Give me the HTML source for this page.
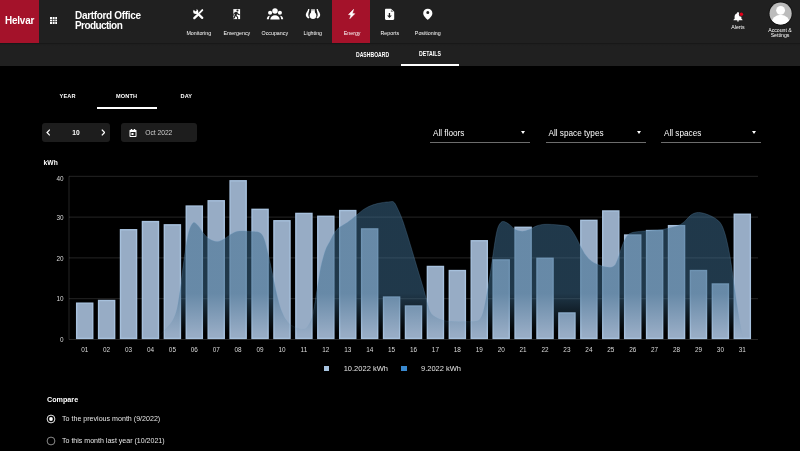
<!DOCTYPE html>
<html>
<head>
<meta charset="utf-8">
<title>Helvar Insights - Energy</title>
<style>
html,body{margin:0;padding:0;background:#000;}
body{width:800px;height:451px;overflow:hidden;position:relative;font-family:"Liberation Sans",sans-serif;color:#fff;}
.abs{position:absolute;white-space:nowrap;line-height:1;}
#topbar{position:absolute;left:0;top:0;width:800px;height:43px;background:#212121;}
#subbar{position:absolute;left:0;top:43px;width:800px;height:22.800px;background:linear-gradient(#161616,#1f1f1f 1.500px,#212121 3px);box-sizing:border-box;}
#logo{position:absolute;left:0;top:0;width:39px;height:43px;background:#a5132b;}
#logo span{position:absolute;left:4.500px;top:15px;font-weight:bold;font-size:11px;line-height:11px;transform-origin:0 0;transform:scaleX(0.9);letter-spacing:-0.2px;}
.nav{position:absolute;top:0;width:38px;height:43px;text-align:center;}
.nav.active{background:#a5132b;}
.nav .lbl{position:absolute;left:-9.2px;right:-10.8px;top:29.6px;font-size:5.3px;line-height:6px;text-align:center;color:#fff;}
.nav svg{position:absolute;left:13px;top:8px;width:12px;height:12px;}
.chart{position:absolute;left:0;top:0;}
.xl{position:absolute;top:345.7px;width:20px;text-align:center;font-size:6.4px;line-height:7px;color:#dcdcdc;}
.yl{position:absolute;left:43.5px;width:20px;text-align:right;font-size:6.4px;line-height:7px;color:#dcdcdc;}
.box{position:absolute;background:#1e1e1e;border-radius:3px;}
.sel{position:absolute;height:1.4px;background:#6e6e6e;}
.tri{position:absolute;width:0;height:0;border-left:2.7px solid transparent;border-right:2.7px solid transparent;border-top:3.1px solid #fff;}
</style>
</head>
<body>
<div id="root" style="position:absolute;left:0;top:0;width:800px;height:451px;will-change:transform;transform:translateZ(0);opacity:0.999">
<div id="topbar">
  <div id="logo"><span>Helvar</span></div>
  <!-- grid icon -->
  <svg class="abs" style="left:49.700px;top:16.500px" width="7.400" height="7" viewBox="0 0 8 8" preserveAspectRatio="none"><rect width="8" height="8" fill="#fff"/><g fill="#212121"><rect x="2.300" y="0" width=".7" height="8"/><rect x="5" y="0" width=".7" height="8"/><rect x="0" y="2.300" width="8" height=".7"/><rect x="0" y="5" width="8" height=".7"/></g></svg>
  <div class="abs" id="title" style="left:75px;top:10.500px;font-weight:bold;font-size:10px;line-height:10px;letter-spacing:-0.32px;">Dartford Office<br><span style="letter-spacing:-0.560px">Production</span></div>

  <div class="nav" style="left:179px">
    <div class="lbl">Monitoring</div>
  </div>
  <div class="nav" style="left:217px">
    <div class="lbl">Emergency</div>
  </div>
  <div class="nav" style="left:255px">
    <div class="lbl">Occupancy</div>
  </div>
  <div class="nav" style="left:293px">
    <div class="lbl">Lighting</div>
  </div>
  <div class="nav active" style="left:332.400px;width:37.900px">
    <div class="lbl">Energy</div>
  </div>
  <div class="nav" style="left:370px">
    <div class="lbl">Reports</div>
  </div>
  <div class="nav" style="left:408px">
    <div class="lbl">Positioning</div>
  </div>


  <svg class="abs" style="left:0;top:0" width="800" height="43" viewBox="0 0 800 43">
    <!-- monitoring: crossed wrench + screwdriver -->
    <g stroke="#fff" stroke-linecap="round" fill="none">
      <line x1="196.500" y1="12.300" x2="202.200" y2="17.900" stroke-width="2.300"/>
      <line x1="202.300" y1="10.100" x2="199.600" y2="12.800" stroke-width="1.900"/>
      <line x1="198" y1="14.600" x2="194.300" y2="18.100" stroke-width="2.300"/>
    </g>
    <circle cx="195.700" cy="11.500" r="2.500" fill="#fff"/>
    <path d="M192.500 8.500l3 3 1.500-1.500-2.600-2.900z" fill="#212121"/>
    <!-- emergency -->
    <rect x="233" y="9.100" width="7.100" height="10" fill="#fff"/>
    <g fill="#212121" transform="translate(236.600 14.100) scale(1.2) translate(-237.300 -14.200)"><circle cx="238" cy="11.200" r=".900"/><path d="M235 13.300l1.700-1 1.300.3.900 1.400 1.100.3-.2.800-1.500-.4-.6-.9-.4 1.500 1.300 1.300v2.200h-.9v-1.900l-1.300-1.200-.6 1.900-2 .6-.3-.8 1.600-.5.800-3.100-.8.500v1.100h-.800z"/><rect x="234" y="10" width="1.200" height="8" opacity=".35"/></g>
    <!-- occupancy -->
    <g fill="#fff">
      <circle cx="275" cy="11.100" r="2.750"/>
      <path d="M270.300 19.500c0-2.600 2.100-4.200 4.700-4.200s4.700 1.600 4.700 4.200z"/>
      <circle cx="270.100" cy="12.800" r="2.050"/>
      <circle cx="279.900" cy="12.800" r="2.050"/>
      <path d="M266.800 19.200c0-2 1.200-3.300 3.200-3.500-.700.900-1.100 2-1.100 3.500z"/>
      <path d="M283.200 19.200c0-2-1.200-3.300-3.200-3.500.7.900 1.100 2 1.100 3.500z"/>
    </g>
    <!-- lighting -->
    <g fill="#fff">
      <circle cx="313" cy="15.600" r="3.350"/>
      <path d="M311.400 9.300h3.200l.5 4.500h-4.200z"/>
      <rect x="311.400" y="9" width="3.200" height="1.500" fill="#a8a8a8"/>
      <path d="M308.200 9 L309.400 9 C309.200 11.400 308.400 12.800 308.300 14.700 C308.300 16 309 17 309.600 17.800 L308.100 18.500 C306.700 17.400 305.800 16.200 305.800 14.800 C305.800 12.800 307.700 11.500 308.200 9 Z"/>
      <path d="M317.800 9 L316.600 9 C316.800 11.400 317.600 12.800 317.700 14.700 C317.700 16 317 17 316.400 17.800 L317.900 18.500 C319.300 17.400 320.200 16.200 320.200 14.800 C320.200 12.800 318.300 11.500 317.800 9 Z"/>
    </g>
    <!-- energy bolt -->
    <path fill="#fff" stroke="#fff" stroke-width=".5" stroke-linejoin="round" d="M353.600 9.300L348.500 14.600 350.900 14.900 349.800 18.700 354.800 13.700 352.400 13.400Z"/>
    <!-- reports -->
    <path fill="#fff" d="M386.200 8.700h4.800l3.200 3.100v7c0 .7-.5 1.200-1.200 1.200h-6.800c-.7 0-1.200-.5-1.200-1.200V9.900c0-.7.500-1.200 1.200-1.200z"/>
    <path fill="#212121" opacity=".5" d="M390.900 9.500v2.500h2.600z"/>
    <path fill="#212121" d="M388.800 13h1.300v2.500h1.700l-2.350 2.500-2.350-2.500h1.700z"/>
    <!-- positioning -->
    <path fill="#fff" fill-rule="evenodd" d="M427.800 8.800C425.200 8.800 423.200 10.800 423.200 13.300 C423.200 16.600 427.800 20 427.800 20 C427.800 20 432.400 16.600 432.400 13.300 C432.400 10.800 430.400 8.800 427.800 8.800 Z M427.800 14 a1.500 1.500 0 1 1 0 -3 a1.500 1.500 0 0 1 0 3 Z"/>
  </svg>
  <!-- alerts -->
  <svg class="abs" style="left:730px;top:8px" width="16" height="16" viewBox="730 8 16 16"><path fill="#fff" d="M738 12c.5 0 .9.400.9.900v.3c1.500.4 2.500 1.700 2.500 3.300v2.200l1.100 1v.5h-9v-.5l1.100-1v-2.200c0-1.600 1-2.900 2.500-3.300v-.3c0-.5.400-.9.900-.9zM737 20.600h2c0 .6-.4 1-1 1s-1-.4-1-1z"/><circle cx="741.400" cy="14.300" r="2.500" fill="#212121"/><circle cx="741.400" cy="14.300" r="1.750" fill="#e2001a"/></svg>
  <div class="abs" style="left:723px;top:23.500px;width:30px;text-align:center;font-size:5.200px;line-height:6px">Alerts</div>
  <!-- account -->
  <svg class="abs" style="left:766px;top:0px" width="30" height="28" viewBox="766 0 30 28"><defs><clipPath id="cp"><circle cx="780.600" cy="13.500" r="11.100"/></clipPath></defs><circle cx="780.600" cy="13.500" r="12" fill="#141414"/><circle cx="780.600" cy="13.500" r="11.100" fill="#bdbdbd"/><g clip-path="url(#cp)" fill="#fff"><circle cx="780.600" cy="10.300" r="4.400"/><ellipse cx="780.600" cy="24.600" rx="9.600" ry="9.900"/></g></svg>
  <div class="abs" style="left:760px;top:27.500px;width:40px;text-align:center;font-size:5.200px;line-height:5.800px;white-space:normal">Account &amp;<br>Settings</div>
</div>
<div id="subbar">
  <div class="abs" style="left:355.600px;top:9px;font-size:6.800px;font-weight:bold;transform-origin:0 0;transform:scaleX(0.750)">DASHBOARD</div>
  <div class="abs" style="left:418.600px;top:8px;font-size:6.800px;font-weight:bold;transform-origin:0 0;transform:scaleX(0.765)">DETAILS</div>
  <div class="abs" style="left:401px;top:20.600px;width:58px;height:2.100px;background:#fff"></div>
</div>

<!-- period tabs -->
<div class="abs" style="left:59.500px;top:93.800px;font-size:5.6px;font-weight:bold;letter-spacing:0.15px">YEAR</div>
<div class="abs" style="left:116px;top:93.800px;font-size:5.6px;font-weight:bold;letter-spacing:0.15px">MONTH</div>
<div class="abs" style="left:180.500px;top:93.800px;font-size:5.6px;font-weight:bold;letter-spacing:0.15px">DAY</div>
<div class="abs" style="left:97px;top:106.500px;width:60px;height:2px;background:#fff"></div>

<!-- month stepper -->
<div class="box" style="left:41.600px;top:123.200px;width:68.600px;height:18.800px"></div>
<svg class="abs" style="left:45.800px;top:129.200px" width="4.700" height="7" viewBox="0 0 4 6"><path d="M3.300 .5L.9 3l2.400 2.500" stroke="#fff" stroke-width="1.100" fill="none"/></svg>
<div class="abs" style="left:66px;top:130px;width:20px;text-align:center;font-size:6.700px;font-weight:bold">10</div>
<svg class="abs" style="left:100.800px;top:129.200px" width="4.700" height="7" viewBox="0 0 4 6"><path d="M.7 .5L3.100 3 .7 5.500" stroke="#fff" stroke-width="1.100" fill="none"/></svg>

<!-- date box -->
<div class="box" style="left:120.600px;top:123.200px;width:76.200px;height:18.800px"></div>
<svg class="abs" style="left:129px;top:128.500px" width="8" height="8" viewBox="0 0 16 16"><path fill="#fff" fill-rule="evenodd" d="M4 0h2v1.500h4V0h2v1.500h1.500c.8 0 1.500.7 1.500 1.500v11.500c0 .8-.7 1.500-1.500 1.500h-11C1.700 16 1 15.300 1 14.500V3c0-.8.700-1.500 1.500-1.500H4zM3 6v8h10V6zM5 8h4v4H5z"/></svg>
<div class="abs" style="left:145.200px;top:130px;font-size:6.700px;color:#cfcfcf">Oct 2022</div>

<!-- dropdowns -->
<div class="abs" style="left:433px;top:130px;font-size:8.200px">All floors</div>
<div class="tri" style="left:521.200px;top:131.200px"></div>
<div class="sel" style="left:430px;top:141.600px;width:100px"></div>
<div class="abs" style="left:548.500px;top:130px;font-size:8.200px">All space types</div>
<div class="tri" style="left:636.800px;top:131.200px"></div>
<div class="sel" style="left:545.500px;top:141.600px;width:100px"></div>
<div class="abs" style="left:664px;top:130px;font-size:8.200px">All spaces</div>
<div class="tri" style="left:752.300px;top:131.200px"></div>
<div class="sel" style="left:661px;top:141.600px;width:100px"></div>

<!-- chart -->
<div class="abs" style="left:43.600px;top:160px;font-size:6.700px;font-weight:bold">kWh</div>
<svg class="chart" width="800" height="451" viewBox="0 0 800 451">
<defs><linearGradient id="ag" x1="0" y1="176" x2="0" y2="339" gradientUnits="userSpaceOnUse"><stop offset="0" stop-color="#3e6c8e" stop-opacity="0.53"/><stop offset="0.72" stop-color="#3e6c8e" stop-opacity="0.53"/><stop offset="0.97" stop-color="#3e6c8e" stop-opacity="0"/></linearGradient><linearGradient id="sg" x1="0" y1="176" x2="0" y2="339" gradientUnits="userSpaceOnUse"><stop offset="0" stop-color="#6c9cc4" stop-opacity="0.24"/><stop offset="0.72" stop-color="#6c9cc4" stop-opacity="0.24"/><stop offset="0.97" stop-color="#6c9cc4" stop-opacity="0.05"/></linearGradient></defs>
<rect x="69.0" y="339.00" width="689.0" height="1" fill="#ffffff" fill-opacity="0.15"/>
<rect x="69.0" y="298.20" width="689.0" height="1" fill="#ffffff" fill-opacity="0.15"/>
<rect x="69.0" y="257.40" width="689.0" height="1" fill="#ffffff" fill-opacity="0.15"/>
<rect x="69.0" y="216.60" width="689.0" height="1" fill="#ffffff" fill-opacity="0.15"/>
<rect x="69.0" y="175.80" width="689.0" height="1" fill="#ffffff" fill-opacity="0.15"/>
<rect x="68.5" y="176.3" width="1" height="163.2" fill="#ffffff" fill-opacity="0.15"/>
<rect x="76.65" y="303.18" width="16.10" height="35.22" fill="#98adc6" stroke="#a8c2de" stroke-width="1.4"/>
<rect x="98.57" y="300.49" width="16.10" height="37.91" fill="#98adc6" stroke="#a8c2de" stroke-width="1.4"/>
<rect x="120.49" y="229.74" width="16.10" height="108.66" fill="#98adc6" stroke="#a8c2de" stroke-width="1.4"/>
<rect x="142.41" y="221.58" width="16.10" height="116.82" fill="#98adc6" stroke="#a8c2de" stroke-width="1.4"/>
<rect x="164.33" y="224.84" width="16.10" height="113.56" fill="#98adc6" stroke="#a8c2de" stroke-width="1.4"/>
<rect x="186.25" y="206.08" width="16.10" height="132.32" fill="#98adc6" stroke="#a8c2de" stroke-width="1.4"/>
<rect x="208.17" y="200.77" width="16.10" height="137.63" fill="#98adc6" stroke="#a8c2de" stroke-width="1.4"/>
<rect x="230.09" y="180.78" width="16.10" height="157.62" fill="#98adc6" stroke="#a8c2de" stroke-width="1.4"/>
<rect x="252.01" y="209.34" width="16.10" height="129.06" fill="#98adc6" stroke="#a8c2de" stroke-width="1.4"/>
<rect x="273.93" y="220.76" width="16.10" height="117.64" fill="#98adc6" stroke="#a8c2de" stroke-width="1.4"/>
<rect x="295.85" y="213.42" width="16.10" height="124.98" fill="#98adc6" stroke="#a8c2de" stroke-width="1.4"/>
<rect x="317.77" y="216.28" width="16.10" height="122.12" fill="#98adc6" stroke="#a8c2de" stroke-width="1.4"/>
<rect x="339.69" y="210.56" width="16.10" height="127.84" fill="#98adc6" stroke="#a8c2de" stroke-width="1.4"/>
<rect x="361.61" y="228.92" width="16.10" height="109.48" fill="#98adc6" stroke="#a8c2de" stroke-width="1.4"/>
<rect x="383.53" y="297.06" width="16.10" height="41.34" fill="#98adc6" stroke="#a8c2de" stroke-width="1.4"/>
<rect x="405.45" y="306.04" width="16.10" height="32.36" fill="#98adc6" stroke="#a8c2de" stroke-width="1.4"/>
<rect x="427.37" y="266.46" width="16.10" height="71.94" fill="#98adc6" stroke="#a8c2de" stroke-width="1.4"/>
<rect x="449.29" y="270.54" width="16.10" height="67.86" fill="#98adc6" stroke="#a8c2de" stroke-width="1.4"/>
<rect x="471.21" y="240.76" width="16.10" height="97.64" fill="#98adc6" stroke="#a8c2de" stroke-width="1.4"/>
<rect x="493.13" y="259.93" width="16.10" height="78.47" fill="#98adc6" stroke="#a8c2de" stroke-width="1.4"/>
<rect x="515.05" y="227.29" width="16.10" height="111.11" fill="#98adc6" stroke="#a8c2de" stroke-width="1.4"/>
<rect x="536.97" y="258.30" width="16.10" height="80.10" fill="#98adc6" stroke="#a8c2de" stroke-width="1.4"/>
<rect x="558.89" y="312.97" width="16.10" height="25.43" fill="#98adc6" stroke="#a8c2de" stroke-width="1.4"/>
<rect x="580.81" y="220.36" width="16.10" height="118.04" fill="#98adc6" stroke="#a8c2de" stroke-width="1.4"/>
<rect x="602.73" y="210.97" width="16.10" height="127.43" fill="#98adc6" stroke="#a8c2de" stroke-width="1.4"/>
<rect x="624.65" y="235.04" width="16.10" height="103.36" fill="#98adc6" stroke="#a8c2de" stroke-width="1.4"/>
<rect x="646.57" y="230.56" width="16.10" height="107.84" fill="#98adc6" stroke="#a8c2de" stroke-width="1.4"/>
<rect x="668.49" y="225.66" width="16.10" height="112.74" fill="#98adc6" stroke="#a8c2de" stroke-width="1.4"/>
<rect x="690.41" y="270.54" width="16.10" height="67.86" fill="#98adc6" stroke="#a8c2de" stroke-width="1.4"/>
<rect x="712.33" y="284.00" width="16.10" height="54.40" fill="#98adc6" stroke="#a8c2de" stroke-width="1.4"/>
<rect x="734.25" y="214.24" width="16.10" height="124.16" fill="#98adc6" stroke="#a8c2de" stroke-width="1.4"/>
<path d="M150.5 339.0 C151.8 338.7 155.6 338.5 158.0 337.0 C160.4 335.5 162.6 332.5 165.0 329.8 C167.4 327.1 170.5 324.3 172.5 320.8 C174.5 317.3 175.8 313.8 177.0 308.8 C178.2 303.8 179.0 297.8 180.0 290.8 C181.0 283.8 182.0 274.4 183.0 266.9 C184.0 259.4 185.0 251.9 186.0 245.9 C187.0 239.9 187.8 234.9 189.0 231.0 C190.2 227.1 191.9 223.5 193.4 222.6 C194.9 221.7 196.2 223.7 198.0 225.6 C199.8 227.5 202.0 231.7 204.0 234.0 C206.0 236.3 207.8 238.1 210.0 239.3 C212.2 240.5 214.9 241.6 217.4 241.4 C219.9 241.2 222.4 239.7 224.9 238.4 C227.4 237.1 229.8 234.6 232.3 233.4 C234.8 232.2 236.5 231.3 239.8 231.0 C243.1 230.7 248.7 231.3 252.0 231.6 C255.3 231.8 257.5 231.4 259.5 232.5 C261.5 233.6 262.5 234.7 264.0 238.4 C265.5 242.1 266.9 248.7 268.4 254.9 C269.9 261.1 271.4 268.9 272.9 275.9 C274.4 282.9 275.9 290.8 277.4 296.8 C278.9 302.8 280.1 307.6 281.9 311.8 C283.6 316.1 285.6 319.7 287.9 322.3 C290.1 324.9 292.9 326.2 295.4 327.4 C297.9 328.5 300.9 329.3 302.9 329.2 C304.9 329.1 305.9 328.7 307.4 326.8 C308.9 324.9 310.6 321.8 311.9 317.8 C313.1 313.8 313.9 308.3 314.9 302.8 C315.9 297.3 316.8 290.9 317.8 284.9 C318.8 278.9 319.6 272.6 320.8 266.9 C322.1 261.1 323.8 254.7 325.3 250.4 C326.8 246.2 327.9 244.9 329.8 241.4 C331.7 237.9 334.0 232.6 336.9 229.5 C339.8 226.4 344.0 224.9 347.2 222.6 C350.4 220.3 352.9 218.1 355.8 215.8 C358.7 213.5 361.5 210.7 364.4 208.9 C367.3 207.1 370.1 205.8 373.0 204.8 C375.9 203.8 378.6 203.2 381.5 202.7 C384.4 202.2 388.1 201.8 390.1 201.7 C392.1 201.6 392.5 201.1 393.6 202.0 C394.8 202.9 395.6 204.3 397.0 207.2 C398.4 210.1 400.5 214.6 402.2 219.2 C403.9 223.8 405.6 229.2 407.3 234.7 C409.0 240.1 410.8 246.2 412.5 251.9 C414.2 257.6 415.9 263.3 417.6 269.0 C419.3 274.7 421.2 280.9 422.8 286.2 C424.4 291.5 425.6 296.7 426.9 301.0 C428.1 305.3 428.9 309.3 430.3 312.0 C431.7 314.7 433.2 315.7 435.5 317.1 C437.8 318.5 440.9 319.9 444.0 320.6 C447.1 321.4 450.9 321.4 454.4 321.6 C457.8 321.8 461.3 321.7 464.7 321.6 C468.1 321.6 472.4 321.8 475.0 321.3 C477.6 320.9 478.7 320.7 480.1 318.9 C481.5 317.1 482.5 314.6 483.6 310.3 C484.8 306.0 485.9 299.4 487.0 293.1 C488.1 286.8 489.2 279.9 490.4 272.5 C491.5 265.1 492.8 255.6 493.9 248.4 C495.0 241.2 496.1 233.8 497.3 229.5 C498.5 225.2 499.7 223.9 500.8 222.6 C501.9 221.3 502.8 221.3 504.2 221.6 C505.6 221.9 507.4 223.1 509.3 224.4 C511.2 225.7 513.3 228.4 515.5 229.5 C517.7 230.6 520.0 231.2 522.3 231.2 C524.6 231.2 526.9 230.3 529.2 229.5 C531.5 228.7 533.8 226.9 536.1 226.1 C538.4 225.2 540.4 224.7 543.0 224.4 C545.6 224.1 548.6 224.3 551.5 224.4 C554.4 224.5 557.5 224.8 560.1 225.1 C562.7 225.4 565.3 225.5 567.0 226.1 C568.7 226.7 569.0 226.8 570.4 228.5 C571.8 230.2 573.9 233.4 575.6 236.4 C577.3 239.4 579.1 243.5 580.8 246.7 C582.5 249.8 584.0 252.8 585.9 255.3 C587.8 257.8 589.5 259.8 592.0 261.5 C594.5 263.2 597.7 264.6 600.6 265.6 C603.5 266.6 606.9 267.3 609.2 267.3 C611.5 267.3 613.0 267.0 614.4 265.6 C615.8 264.2 616.7 261.6 617.8 258.7 C618.9 255.8 620.1 251.6 621.2 248.4 C622.4 245.2 623.6 242.1 624.7 239.8 C625.9 237.5 626.7 235.9 628.1 234.7 C629.5 233.4 631.0 232.9 633.3 232.3 C635.6 231.7 638.8 231.5 641.9 231.2 C645.0 230.8 648.8 230.5 652.2 230.2 C655.6 229.9 659.1 230.0 662.5 229.5 C665.9 229.0 669.8 227.9 672.8 227.1 C675.8 226.2 678.4 225.6 680.6 224.4 C682.8 223.2 684.1 221.8 685.8 220.2 C687.5 218.6 689.2 216.3 690.9 215.1 C692.6 213.8 694.4 213.1 696.1 212.7 C697.8 212.3 699.2 212.4 701.2 212.7 C703.2 213.0 705.8 213.8 708.1 214.7 C710.4 215.6 713.0 216.9 715.0 218.2 C717.0 219.5 718.7 220.7 720.1 222.6 C721.5 224.5 722.5 226.3 723.6 229.5 C724.8 232.7 725.9 236.6 727.0 241.5 C728.1 246.4 729.2 251.8 730.4 258.7 C731.5 265.6 732.8 274.8 733.9 282.8 C735.0 290.8 736.1 299.4 737.3 306.8 C738.4 314.2 739.8 322.0 740.8 327.4 C741.8 332.8 742.8 337.1 743.2 339.0 Z" fill="url(#ag)"/>
<path d="M150.5 339.0 C151.8 338.7 155.6 338.5 158.0 337.0 C160.4 335.5 162.6 332.5 165.0 329.8 C167.4 327.1 170.5 324.3 172.5 320.8 C174.5 317.3 175.8 313.8 177.0 308.8 C178.2 303.8 179.0 297.8 180.0 290.8 C181.0 283.8 182.0 274.4 183.0 266.9 C184.0 259.4 185.0 251.9 186.0 245.9 C187.0 239.9 187.8 234.9 189.0 231.0 C190.2 227.1 191.9 223.5 193.4 222.6 C194.9 221.7 196.2 223.7 198.0 225.6 C199.8 227.5 202.0 231.7 204.0 234.0 C206.0 236.3 207.8 238.1 210.0 239.3 C212.2 240.5 214.9 241.6 217.4 241.4 C219.9 241.2 222.4 239.7 224.9 238.4 C227.4 237.1 229.8 234.6 232.3 233.4 C234.8 232.2 236.5 231.3 239.8 231.0 C243.1 230.7 248.7 231.3 252.0 231.6 C255.3 231.8 257.5 231.4 259.5 232.5 C261.5 233.6 262.5 234.7 264.0 238.4 C265.5 242.1 266.9 248.7 268.4 254.9 C269.9 261.1 271.4 268.9 272.9 275.9 C274.4 282.9 275.9 290.8 277.4 296.8 C278.9 302.8 280.1 307.6 281.9 311.8 C283.6 316.1 285.6 319.7 287.9 322.3 C290.1 324.9 292.9 326.2 295.4 327.4 C297.9 328.5 300.9 329.3 302.9 329.2 C304.9 329.1 305.9 328.7 307.4 326.8 C308.9 324.9 310.6 321.8 311.9 317.8 C313.1 313.8 313.9 308.3 314.9 302.8 C315.9 297.3 316.8 290.9 317.8 284.9 C318.8 278.9 319.6 272.6 320.8 266.9 C322.1 261.1 323.8 254.7 325.3 250.4 C326.8 246.2 327.9 244.9 329.8 241.4 C331.7 237.9 334.0 232.6 336.9 229.5 C339.8 226.4 344.0 224.9 347.2 222.6 C350.4 220.3 352.9 218.1 355.8 215.8 C358.7 213.5 361.5 210.7 364.4 208.9 C367.3 207.1 370.1 205.8 373.0 204.8 C375.9 203.8 378.6 203.2 381.5 202.7 C384.4 202.2 388.1 201.8 390.1 201.7 C392.1 201.6 392.5 201.1 393.6 202.0 C394.8 202.9 395.6 204.3 397.0 207.2 C398.4 210.1 400.5 214.6 402.2 219.2 C403.9 223.8 405.6 229.2 407.3 234.7 C409.0 240.1 410.8 246.2 412.5 251.9 C414.2 257.6 415.9 263.3 417.6 269.0 C419.3 274.7 421.2 280.9 422.8 286.2 C424.4 291.5 425.6 296.7 426.9 301.0 C428.1 305.3 428.9 309.3 430.3 312.0 C431.7 314.7 433.2 315.7 435.5 317.1 C437.8 318.5 440.9 319.9 444.0 320.6 C447.1 321.4 450.9 321.4 454.4 321.6 C457.8 321.8 461.3 321.7 464.7 321.6 C468.1 321.6 472.4 321.8 475.0 321.3 C477.6 320.9 478.7 320.7 480.1 318.9 C481.5 317.1 482.5 314.6 483.6 310.3 C484.8 306.0 485.9 299.4 487.0 293.1 C488.1 286.8 489.2 279.9 490.4 272.5 C491.5 265.1 492.8 255.6 493.9 248.4 C495.0 241.2 496.1 233.8 497.3 229.5 C498.5 225.2 499.7 223.9 500.8 222.6 C501.9 221.3 502.8 221.3 504.2 221.6 C505.6 221.9 507.4 223.1 509.3 224.4 C511.2 225.7 513.3 228.4 515.5 229.5 C517.7 230.6 520.0 231.2 522.3 231.2 C524.6 231.2 526.9 230.3 529.2 229.5 C531.5 228.7 533.8 226.9 536.1 226.1 C538.4 225.2 540.4 224.7 543.0 224.4 C545.6 224.1 548.6 224.3 551.5 224.4 C554.4 224.5 557.5 224.8 560.1 225.1 C562.7 225.4 565.3 225.5 567.0 226.1 C568.7 226.7 569.0 226.8 570.4 228.5 C571.8 230.2 573.9 233.4 575.6 236.4 C577.3 239.4 579.1 243.5 580.8 246.7 C582.5 249.8 584.0 252.8 585.9 255.3 C587.8 257.8 589.5 259.8 592.0 261.5 C594.5 263.2 597.7 264.6 600.6 265.6 C603.5 266.6 606.9 267.3 609.2 267.3 C611.5 267.3 613.0 267.0 614.4 265.6 C615.8 264.2 616.7 261.6 617.8 258.7 C618.9 255.8 620.1 251.6 621.2 248.4 C622.4 245.2 623.6 242.1 624.7 239.8 C625.9 237.5 626.7 235.9 628.1 234.7 C629.5 233.4 631.0 232.9 633.3 232.3 C635.6 231.7 638.8 231.5 641.9 231.2 C645.0 230.8 648.8 230.5 652.2 230.2 C655.6 229.9 659.1 230.0 662.5 229.5 C665.9 229.0 669.8 227.9 672.8 227.1 C675.8 226.2 678.4 225.6 680.6 224.4 C682.8 223.2 684.1 221.8 685.8 220.2 C687.5 218.6 689.2 216.3 690.9 215.1 C692.6 213.8 694.4 213.1 696.1 212.7 C697.8 212.3 699.2 212.4 701.2 212.7 C703.2 213.0 705.8 213.8 708.1 214.7 C710.4 215.6 713.0 216.9 715.0 218.2 C717.0 219.5 718.7 220.7 720.1 222.6 C721.5 224.5 722.5 226.3 723.6 229.5 C724.8 232.7 725.9 236.6 727.0 241.5 C728.1 246.4 729.2 251.8 730.4 258.7 C731.5 265.6 732.8 274.8 733.9 282.8 C735.0 290.8 736.1 299.4 737.3 306.8 C738.4 314.2 739.8 322.0 740.8 327.4 C741.8 332.8 742.8 337.1 743.2 339.0" fill="none" stroke="url(#sg)" stroke-width="1"/>
</svg>
<span class="yl" style="top:336.1px">0</span>
<span class="yl" style="top:295.3px">10</span>
<span class="yl" style="top:254.5px">20</span>
<span class="yl" style="top:213.7px">30</span>
<span class="yl" style="top:175.1px">40</span>
<span class="xl" style="left:74.7px">01</span>
<span class="xl" style="left:96.6px">02</span>
<span class="xl" style="left:118.5px">03</span>
<span class="xl" style="left:140.5px">04</span>
<span class="xl" style="left:162.4px">05</span>
<span class="xl" style="left:184.3px">06</span>
<span class="xl" style="left:206.2px">07</span>
<span class="xl" style="left:228.1px">08</span>
<span class="xl" style="left:250.1px">09</span>
<span class="xl" style="left:272.0px">10</span>
<span class="xl" style="left:293.9px">11</span>
<span class="xl" style="left:315.8px">12</span>
<span class="xl" style="left:337.7px">13</span>
<span class="xl" style="left:359.7px">14</span>
<span class="xl" style="left:381.6px">15</span>
<span class="xl" style="left:403.5px">16</span>
<span class="xl" style="left:425.4px">17</span>
<span class="xl" style="left:447.3px">18</span>
<span class="xl" style="left:469.3px">19</span>
<span class="xl" style="left:491.2px">20</span>
<span class="xl" style="left:513.1px">21</span>
<span class="xl" style="left:535.0px">22</span>
<span class="xl" style="left:556.9px">23</span>
<span class="xl" style="left:578.9px">24</span>
<span class="xl" style="left:600.8px">25</span>
<span class="xl" style="left:622.7px">26</span>
<span class="xl" style="left:644.6px">27</span>
<span class="xl" style="left:666.5px">28</span>
<span class="xl" style="left:688.5px">29</span>
<span class="xl" style="left:710.4px">30</span>
<span class="xl" style="left:732.3px">31</span>

<!-- legend -->
<div class="abs" style="left:323.600px;top:365.600px;width:5.600px;height:5.600px;background:#a8c4e0"></div>
<div class="abs" style="left:343.700px;top:365.400px;font-size:7.500px;color:#e6e6e6">10.2022 kWh</div>
<div class="abs" style="left:401.400px;top:365.600px;width:5.600px;height:5.600px;background:#3a8ad0"></div>
<div class="abs" style="left:421px;top:365.400px;font-size:7.500px;color:#e6e6e6">9.2022 kWh</div>

<!-- compare -->
<div class="abs" style="left:47px;top:395.500px;font-size:7.200px;font-weight:bold">Compare</div>
<svg class="abs" style="left:46px;top:414px" width="10" height="10" viewBox="0 0 10 10"><circle cx="5" cy="5" r="3.900" fill="none" stroke="#fff" stroke-width="0.900"/><circle cx="5" cy="5" r="1.900" fill="#fff"/></svg>
<div class="abs" style="left:62px;top:416.400px;font-size:7.100px;color:#e6e6e6">To the previous month (9/2022)</div>
<svg class="abs" style="left:46px;top:436px" width="10" height="10" viewBox="0 0 10 10"><circle cx="5" cy="5" r="3.900" fill="none" stroke="#9a9a9a" stroke-width="0.900"/></svg>
<div class="abs" style="left:62px;top:437.400px;font-size:7.050px;color:#e6e6e6">To this month last year (10/2021)</div>
</div>
</body>
</html>
